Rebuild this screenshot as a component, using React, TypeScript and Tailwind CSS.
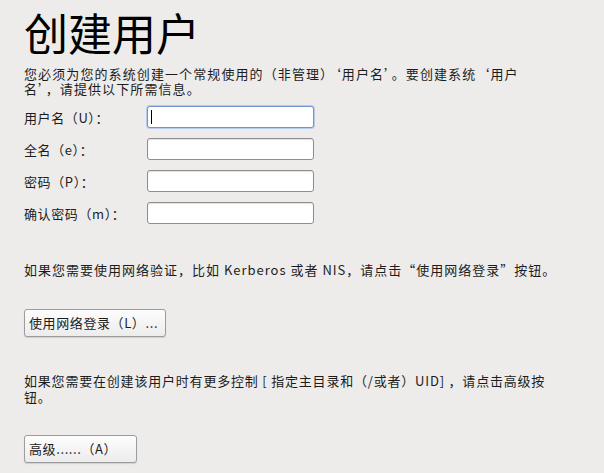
const font = { fontFamily: '"Noto Sans CJK SC", "DejaVu Sans", sans-serif' }

function Field({ label, focused }: { label: string; focused?: boolean }) {
  return (
    <div className="flex items-center h-[22px]">
      <div className="w-[123px] shrink-0 text-[13px] tracking-[0.6px] text-[#1c1c1c] leading-[15px]">{label}</div>
      <div
        className={
          focused
            ? 'relative w-[167px] h-[22px] rounded-[3px] bg-white border border-[#6f94d0] shadow-[0_0_0_1px_#b9cbea]'
            : 'relative w-[167px] h-[22px] rounded-[3px] bg-white border border-[#8e8e8e] shadow-[inset_0_1px_1px_rgba(0,0,0,0.12)]'
        }
      >
        {focused && <div className="absolute left-[3px] top-[3px] w-px h-[14px] bg-black" />}
      </div>
    </div>
  )
}

function Btn({ children, width }: { children: string; width: string }) {
  return (
    <button
      className={`${width} h-[28px] rounded-[3px] border border-[#9c9c9c] bg-gradient-to-b from-[#fdfdfd] to-[#ececec] shadow-[0_1px_1px_rgba(0,0,0,0.12)] text-left pl-[4px] text-[13px] tracking-[0.6px] text-[#1c1c1c]`}
      style={font}
    >
      {children}
    </button>
  )
}

export default function App() {
  return (
    <div className="w-[604px] h-[473px] bg-[#edeceb] overflow-hidden px-6" style={font}>
      <h1 className="text-[44px] leading-[64px] font-normal text-black">创建用户</h1>

      <p className="mt-[2px] text-[13px] leading-[15px] tracking-[1.1px] text-[#1c1c1c]">
        您必须为您的系统创建一个常规使用的（非管理）‘用户名’。要创建系统‘用户
        <br />
        名’，请提供以下所需信息。
      </p>

      <div className="mt-[10px] flex flex-col gap-[10px]">
        <Field label="用户名（U）：" focused />
        <Field label="全名（e）：" />
        <Field label="密码（P）：" />
        <Field label="确认密码（m）：" />
      </div>

      <p className="mt-[38px] text-[13px] leading-[15px] tracking-[1px] text-[#1c1c1c]">
        如果您需要使用网络验证，比如 Kerberos 或者 NIS，请点击“使用网络登录”按钮。
      </p>

      <div className="mt-[32px]">
        <Btn width="w-[142px]">使用网络登录（L）...</Btn>
      </div>

      <p className="mt-[36px] text-[13px] leading-[16px] tracking-[0.8px] text-[#1c1c1c]">
        如果您需要在创建该用户时有更多控制 [ 指定主目录和（/或者）UID] ，请点击高级按
        <br />
        钮。
      </p>

      <div className="mt-[30px]">
        <Btn width="w-[113px]">高级......（A）</Btn>
      </div>
    </div>
  )
}
